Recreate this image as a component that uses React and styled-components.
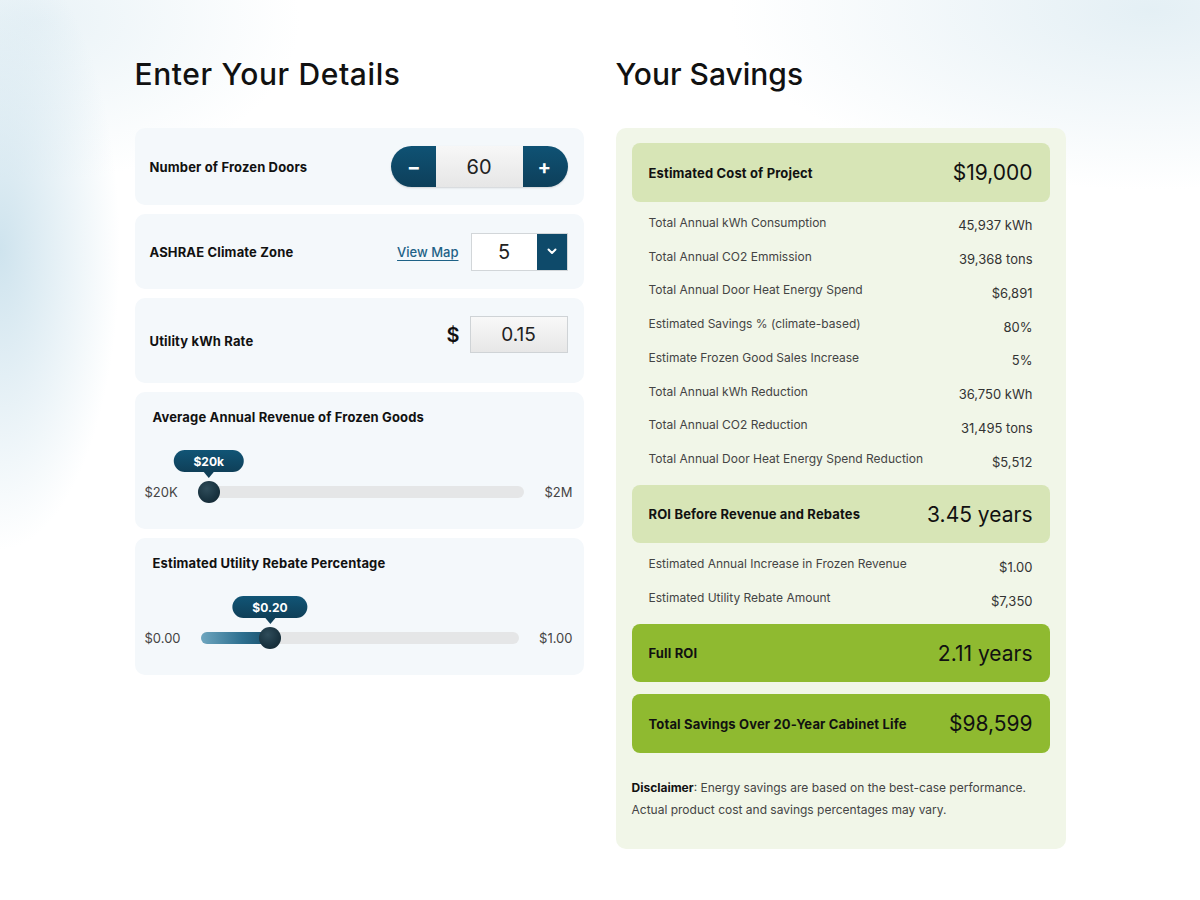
import React from 'react';
import styled, { createGlobalStyle } from 'styled-components';

const GlobalStyle = createGlobalStyle`
  body {
    margin: 0;
    font-family: Inter, "Noto Sans", Arial, sans-serif;
    color: #111;
    background:
      radial-gradient(ellipse 120px 300px at 0px 250px, rgba(190, 218, 232, 0.75), rgba(255, 255, 255, 0) 100%),
      radial-gradient(ellipse 420px 180px at 1150px 10px, rgba(210, 229, 238, 0.6), rgba(255, 255, 255, 0) 100%),
      radial-gradient(ellipse 260px 160px at 40px 20px, rgba(220, 235, 242, 0.6), rgba(255, 255, 255, 0) 100%),
      #fff;
    min-height: 900px;
  }
`;

const Page = styled.div`
  width: 931px;
  margin: 0 auto;
  padding-top: 56px;
  display: grid;
  grid-template-columns: 449px 450px;
  column-gap: 32px;
  align-items: start;
`;

const Column = styled.div`
  display: flex;
  flex-direction: column;
`;

const Heading = styled.h1`
  margin: 0 0 36px;
  font-size: 30px;
  line-height: 36px;
  font-weight: 500;
  letter-spacing: ${(p) => p.spacing || 0}px;
  color: #111;
`;

const Card = styled.div`
  background: #f4f8fb;
  border-radius: 10px;
  height: ${(p) => p.height}px;
  margin-bottom: 9px;
  padding: 0 16px 0 15px;
  box-sizing: border-box;
  display: flex;
  align-items: center;
  justify-content: space-between;
`;

const Label = styled.div`
  font-size: 13px;
  font-weight: 700;
  letter-spacing: 0.15px;
  color: #111;
`;

const Stepper = styled.div`
  display: flex;
  height: 41px;
  border-radius: 21px;
  overflow: hidden;
  box-shadow: 0 1px 2px rgba(0, 0, 0, 0.15);
`;

const StepButton = styled.button`
  width: 45px;
  border: none;
  padding: 0;
  background: linear-gradient(180deg, #0f5274 0%, #0d3f5a 100%);
  color: #fff;
  font-family: inherit;
  font-size: 20px;
  font-weight: 700;
  line-height: 1;
  display: flex;
  align-items: center;
  justify-content: ${(p) => (p.side === 'left' ? 'flex-end' : 'flex-start')};
  padding-${(p) => (p.side === 'left' ? 'right' : 'left')}: 15px;
  cursor: pointer;
`;

const StepValue = styled.div`
  width: 87px;
  background: linear-gradient(180deg, #f7f7f7 0%, #e6e6e6 100%);
  display: flex;
  align-items: center;
  justify-content: center;
  font-size: 20px;
  color: #222;
`;

const ZoneGroup = styled.div`
  display: flex;
  align-items: center;
  gap: 12px;
`;

const MapLink = styled.a`
  font-size: 13px;
  font-weight: 500;
  color: #1e6287;
  text-decoration: underline;
  text-underline-offset: 3px;
`;

const SelectBox = styled.div`
  display: flex;
  width: 97px;
  height: 38px;
  box-sizing: border-box;
  border: 1px solid #d2d6d9;
  background: #fff;
`;

const SelectValue = styled.div`
  flex: 1;
  display: flex;
  align-items: center;
  justify-content: center;
  font-size: 20px;
  color: #222;
`;

const Chevron = styled.div`
  width: 30px;
  background: #0e4a6a;
  display: flex;
  align-items: center;
  justify-content: center;
`;

const RateGroup = styled.div`
  display: flex;
  align-items: center;
  gap: 10px;
  margin-bottom: 12px;
`;

const Dollar = styled.span`
  font-size: 20px;
  font-weight: 600;
  color: #111;
`;

const RateInput = styled.div`
  width: 98px;
  height: 37px;
  box-sizing: border-box;
  border: 1px solid #cfd3d6;
  background: linear-gradient(180deg, #f8f8f8 0%, #e7e7e7 100%);
  display: flex;
  align-items: center;
  justify-content: center;
  font-size: 19px;
  color: #222;
`;

const SliderCard = styled.div`
  background: #f4f8fb;
  border-radius: 10px;
  height: 137px;
  margin-bottom: 9px;
  padding: 16px 11px 0 10px;
  box-sizing: border-box;
`;

const SliderTitle = styled.div`
  font-size: 13px;
  font-weight: 700;
  letter-spacing: 0.15px;
  line-height: 18px;
  padding-left: 8px;
`;

const SliderRow = styled.div`
  display: flex;
  align-items: center;
  gap: 20px;
  height: 40px;
  margin-top: 46px;
`;

const EndLabel = styled.span`
  font-size: 13px;
  color: #444;
`;

const Track = styled.div`
  position: relative;
  flex: 1;
  height: 12px;
  border-radius: 6px;
  background: #e5e6e7;
`;

const Fill = styled.div`
  position: absolute;
  left: 0;
  top: 0;
  bottom: 0;
  border-radius: 6px;
  background: linear-gradient(90deg, #6ea6bf 0%, #2d6f8f 60%, #184f6b 100%);
`;

const Thumb = styled.div`
  position: absolute;
  top: 50%;
  width: 22px;
  height: 22px;
  margin: -11px 0 0 -11px;
  border-radius: 50%;
  background: radial-gradient(circle at 40% 35%, #2f4c5a 0%, #1a3441 55%, #10222c 100%);
`;

const Bubble = styled.div`
  position: absolute;
  bottom: 26px;
  transform: translateX(-50%);
  height: 22px;
  padding: 0 20px;
  border-radius: 11px;
  background: linear-gradient(180deg, #115576 0%, #0f3f58 100%);
  color: #fff;
  font-size: 12px;
  font-weight: 700;
  display: flex;
  align-items: center;
  white-space: nowrap;

  &::after {
    content: '';
    position: absolute;
    left: 50%;
    top: 100%;
    margin-left: -5px;
    border-left: 5px solid transparent;
    border-right: 5px solid transparent;
    border-top: 6px solid #0f3f58;
  }
`;

const Panel = styled.div`
  background: #f1f6e8;
  border-radius: 10px;
  padding: 15px 16px 28px;
  display: flex;
  flex-direction: column;
`;

const Box = styled.div`
  height: ${(p) => p.height || 58}px;
  border-radius: 8px;
  background: ${(p) => (p.strong ? '#8fba30' : '#d7e5b6')};
  padding: 0 17px;
  display: flex;
  align-items: center;
  justify-content: space-between;
  margin-bottom: ${(p) => p.gap || 0}px;
`;

const BoxLabel = styled.span`
  font-size: 13px;
  font-weight: 700;
  letter-spacing: 0.15px;
  color: #111;
`;

const BoxValue = styled.span`
  font-size: 21px;
  color: #111;
`;

const Rows = styled.div`
  padding: 5px 0 8px;
`;

const Row = styled.div`
  height: ${(p) => p.h}px;
  padding: 0 17px;
  display: flex;
  align-items: center;
  justify-content: space-between;
`;

const RowLabel = styled.span`
  font-size: 12px;
  color: #444;
  margin-top: -3px;
`;

const RowValue = styled.span`
  font-size: 13px;
  color: #333;
  margin-top: 3px;
`;

const Disclaimer = styled.p`
  margin: 24px 0 0;
  font-size: 12px;
  line-height: 22px;
  color: #444;

  b {
    color: #111;
  }
`;

const Slider = ({ title, min, max, value, pct, filled }) => {
  const left = filled ? `${pct}%` : `calc(${pct}% + 11px)`;
  return (
    <SliderCard>
      <SliderTitle>{title}</SliderTitle>
      <SliderRow>
        <EndLabel>{min}</EndLabel>
        <Track>
          {filled && <Fill style={{ width: `${pct}%` }} />}
          <Thumb style={{ left }} />
          <Bubble style={{ left }}>{value}</Bubble>
        </Track>
        <EndLabel>{max}</EndLabel>
      </SliderRow>
    </SliderCard>
  );
};

const firstRows = [
  ['Total Annual kWh Consumption', '45,937 kWh'],
  ['Total Annual CO2 Emmission', '39,368 tons'],
  ['Total Annual Door Heat Energy Spend', '$6,891'],
  ['Estimated Savings % (climate-based)', '80%'],
  ['Estimate Frozen Good Sales Increase', '5%'],
  ['Total Annual kWh Reduction', '36,750 kWh'],
  ['Total Annual CO2 Reduction', '31,495 tons'],
  ['Total Annual Door Heat Energy Spend Reduction', '$5,512'],
];

const secondRows = [
  ['Estimated Annual Increase in Frozen Revenue', '$1.00'],
  ['Estimated Utility Rebate Amount', '$7,350'],
];

export default function App() {
  return (
    <>
      <GlobalStyle />
      <Page>
        <Column>
          <Heading spacing={0.6}>Enter Your Details</Heading>
          <Card height={77}>
            <Label>Number of Frozen Doors</Label>
            <Stepper>
              <StepButton side="left">−</StepButton>
              <StepValue>60</StepValue>
              <StepButton side="right">+</StepButton>
            </Stepper>
          </Card>
          <Card height={75}>
            <Label>ASHRAE Climate Zone</Label>
            <ZoneGroup>
              <MapLink href="#">View Map</MapLink>
              <SelectBox>
                <SelectValue>5</SelectValue>
                <Chevron>
                  <svg width="10" height="7" viewBox="0 0 10 7">
                    <path d="M1.5 1.5 L5 5 L8.5 1.5" fill="none" stroke="#fff" strokeWidth="2" strokeLinecap="round" strokeLinejoin="round" />
                  </svg>
                </Chevron>
              </SelectBox>
            </ZoneGroup>
          </Card>
          <Card height={85}>
            <Label>Utility kWh Rate</Label>
            <RateGroup>
              <Dollar>$</Dollar>
              <RateInput>0.15</RateInput>
            </RateGroup>
          </Card>
          <Slider
            title="Average Annual Revenue of Frozen Goods"
            min="$20K"
            max="$2M"
            value="$20k"
            pct={0}
          />
          <Slider
            title="Estimated Utility Rebate Percentage"
            min="$0.00"
            max="$1.00"
            value="$0.20"
            pct={21.8}
            filled
          />
        </Column>

        <Column>
          <Heading>Your Savings</Heading>
          <Panel>
            <Box height={59}>
              <BoxLabel>Estimated Cost of Project</BoxLabel>
              <BoxValue>$19,000</BoxValue>
            </Box>
            <Rows>
              {firstRows.map(([label, value]) => (
                <Row key={label} h={33.75}>
                  <RowLabel>{label}</RowLabel>
                  <RowValue>{value}</RowValue>
                </Row>
              ))}
            </Rows>
            <Box>
              <BoxLabel>ROI Before Revenue and Rebates</BoxLabel>
              <BoxValue>3.45 years</BoxValue>
            </Box>
            <Rows>
              {secondRows.map(([label, value]) => (
                <Row key={label} h={34}>
                  <RowLabel>{label}</RowLabel>
                  <RowValue>{value}</RowValue>
                </Row>
              ))}
            </Rows>
            <Box strong gap={12}>
              <BoxLabel>Full ROI</BoxLabel>
              <BoxValue>2.11 years</BoxValue>
            </Box>
            <Box strong height={59}>
              <BoxLabel>Total Savings Over 20-Year Cabinet Life</BoxLabel>
              <BoxValue>$98,599</BoxValue>
            </Box>
            <Disclaimer>
              <b>Disclaimer</b>: Energy savings are based on the best-case performance.
              <br />
              Actual product cost and savings percentages may vary.
            </Disclaimer>
          </Panel>
        </Column>
      </Page>
    </>
  );
}
